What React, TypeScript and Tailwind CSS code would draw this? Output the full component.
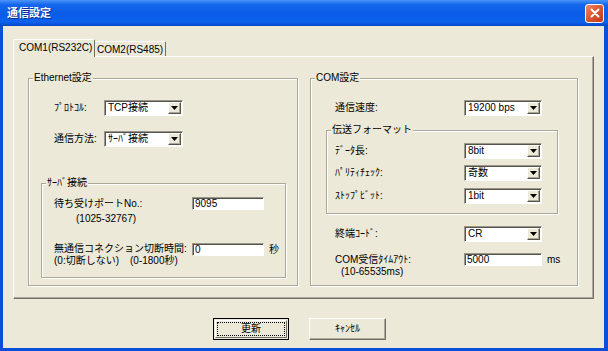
import { ReactNode } from "react";
import { clsx } from "clsx";

const Arrow = () => (
  <svg width="7" height="4" viewBox="0 0 7 4">
    <path d="M0 0h7L3.5 4z" fill="#000" />
  </svg>
);

const Combo = ({ value, className }: { value: string; className?: string }) => (
  <div
    className={clsx(
      "flex h-[16px] items-center border border-t-[#9A978A] border-l-[#9A978A] border-b-white border-r-white bg-white shadow-[inset_1px_1px_0_#55534A]",
      className
    )}
  >
    <span className="flex-1 pl-[3px] leading-[12px]">{value}</span>
    <span className="mr-px flex h-[12px] w-[13px] items-center justify-center border border-t-white border-l-white border-b-[#55534A] border-r-[#55534A] bg-[#ECE9D8] shadow-[inset_-1px_-1px_0_#ACA899]">
      <Arrow />
    </span>
  </div>
);

const Field = ({ value, className }: { value: string; className?: string }) => (
  <div
    className={clsx(
      "flex h-[13px] items-center border border-t-[#9A978A] border-l-[#9A978A] border-b-white border-r-white bg-white pl-[2px] leading-[11px] shadow-[inset_1px_1px_0_#55534A]",
      className
    )}
  >
    {value}
  </div>
);

const Group = ({
  label,
  className,
  children,
}: {
  label: string;
  className?: string;
  children?: ReactNode;
}) => (
  <div
    className={clsx(
      "relative flex flex-col border border-[#ACA899] shadow-[inset_1px_1px_0_#fff,1px_1px_0_#fff]",
      className
    )}
  >
    <span className="absolute -top-[7px] left-[4px] bg-[#ECE9D8] px-[1px] leading-[12px]">
      {label}
    </span>
    {children}
  </div>
);

const Row = ({
  label,
  width,
  children,
  className,
}: {
  label: string;
  width: string;
  children: ReactNode;
  className?: string;
}) => (
  <div className={clsx("flex items-center", className)}>
    <span className={clsx("leading-[12px]", width)}>{label}</span>
    {children}
  </div>
);

const TitleBar = () => (
  <div className="flex h-[26px] items-center justify-between bg-[linear-gradient(to_bottom,#4A95F7_0%,#1466EE_18%,#0A5CE8_55%,#0D62EE_85%,#0444C4_100%)] pl-[7px] pr-[4px]">
    <span className="text-[11px] font-bold leading-[14px] text-white [text-shadow:1px_1px_0_#0A2A8A]">
      通信設定
    </span>
    <div className="flex h-[19px] w-[19px] items-center justify-center rounded-[3px] border border-white bg-[linear-gradient(135deg,#EE8B6C_0%,#DA5A34_45%,#C13A18_100%)]">
      <svg width="10" height="10" viewBox="0 0 10 10">
        <path d="M1.5 1.5l7 7M8.5 1.5l-7 7" stroke="#fff" strokeWidth="2" strokeLinecap="round" />
      </svg>
    </div>
  </div>
);

const Tabs = () => (
  <div className="flex h-[17px] items-end">
    <div className="relative z-10 -mb-px flex h-[18px] w-[82px] items-start border-t border-l border-t-white border-l-white border-r border-r-[#716F64] bg-[#ECE9D8] pl-[5px] pt-[2px] leading-[12px] rounded-tl-[2px] rounded-tr-[2px]">
      COM1(RS232C)
    </div>
    <div className="flex h-[15px] w-[71px] items-start border-t border-t-white border-r border-r-[#716F64] bg-[#ECE9D8] pl-[2px] pt-[2px] leading-[12px] rounded-tr-[2px]">
      COM2(RS485)
    </div>
  </div>
);

const EthernetGroup = () => (
  <Group label="Ethernet設定" className="w-[270px]">
    <Row label="ﾌﾟﾛﾄｺﾙ:" width="w-[50px]" className="ml-[25px] mt-[21px]">
      <Combo value="TCP接続" className="w-[79px]" />
    </Row>
    <Row label="通信方法:" width="w-[50px]" className="ml-[25px] mt-[15px]">
      <Combo value="ｻｰﾊﾞ接続" className="w-[79px]" />
    </Row>
    <Group label="ｻｰﾊﾞ接続" className="ml-[12px] mt-[36px] w-[245px] pb-[10px] pl-[12px]">
      <div className="mt-[13px] flex items-start">
        <div className="flex w-[138px] flex-col">
          <span className="leading-[13px]">待ち受けポートNo.:</span>
          <span className="ml-[22px] mt-[3px] leading-[12px]">(1025-32767)</span>
        </div>
        <Field value="9095" className="w-[72px]" />
      </div>
      <div className="mt-[17px] flex items-start">
        <div className="flex w-[138px] flex-col">
          <span className="leading-[13px]">無通信コネクション切断時間:</span>
          <span className="leading-[12px]">
            (0:切断しない)<span className="ml-[11px]">(0-1800秒)</span>
          </span>
        </div>
        <Field value="0" className="mt-px w-[72px]" />
        <span className="ml-[5px] mt-[1px] leading-[13px]">秒</span>
      </div>
    </Group>
  </Group>
);

const ComGroup = () => (
  <Group label="COM設定" className="w-[268px]">
    <Row label="通信速度:" width="w-[129px]" className="ml-[24px] mt-[21px]">
      <Combo value="19200 bps" className="w-[78px]" />
    </Row>
    <Group label="伝送フォーマット" className="ml-[15px] mt-[14px] h-[84px] w-[232px] pl-[8px]">
      <Row label="ﾃﾞｰﾀ長:" width="w-[129px]" className="mt-[12px]">
        <Combo value="8bit" className="w-[78px]" />
      </Row>
      <Row label="ﾊﾟﾘﾃｨﾁｪｯｸ:" width="w-[129px]" className="mt-[6px]">
        <Combo value="奇数" className="w-[78px]" />
      </Row>
      <Row label="ｽﾄｯﾌﾟﾋﾞｯﾄ:" width="w-[129px]" className="mt-[7px]">
        <Combo value="1bit" className="w-[78px]" />
      </Row>
    </Group>
    <Row label="終端ｺｰﾄﾞ:" width="w-[129px]" className="ml-[24px] mt-[12px]">
      <Combo value="CR" className="w-[78px]" />
    </Row>
    <Row label="COM受信ﾀｲﾑｱｳﾄ:" width="w-[129px]" className="ml-[24px] mt-[11px]">
      <Field value="5000" className="w-[78px]" />
      <span className="ml-[5px] leading-[12px]">ms</span>
    </Row>
    <span className="ml-[30px] leading-[12px]">(10-65535ms)</span>
  </Group>
);

export default function App() {
  return (
    <div className="flex h-[351px] w-[608px] flex-col bg-[#0B4FD6] font-['Liberation_Sans','Noto_Sans_CJK_JP',sans-serif] text-[10px] text-black">
      <TitleBar />
      <div className="mb-[3px] ml-[3px] mr-[4px] flex flex-1 flex-col bg-[#ECE9D8] px-[10px] pt-[13px]">
        <Tabs />
        <div className="flex h-[243px] gap-[12px] border border-t-white border-l-white border-b-[#716F64] border-r-[#716F64] pl-[14px] pt-[21px] shadow-[inset_-1px_-1px_0_#ACA899]">
          <div className="flex h-[208px]">
            <EthernetGroup />
          </div>
          <div className="flex h-[208px]">
            <ComGroup />
          </div>
        </div>
        <div className="ml-[200px] mt-[19px] flex gap-[20px]">
          <button className="flex h-[22px] w-[76px] items-center justify-center border border-black bg-[#ECE9D8] p-[1px]">
            <span className="flex h-full w-full items-center justify-center border border-t-white border-l-white border-b-[#716F64] border-r-[#716F64] p-[1px]">
              <span className="flex h-full w-full items-center justify-center border border-dotted border-black leading-[12px]">
                更新
              </span>
            </span>
          </button>
          <button className="flex h-[22px] w-[77px] items-center justify-center border border-t-white border-l-white border-b-[#716F64] border-r-[#716F64] bg-[#ECE9D8] leading-[12px] shadow-[inset_-1px_-1px_0_#ACA899]">
            ｷｬﾝｾﾙ
          </button>
        </div>
      </div>
    </div>
  );
}
